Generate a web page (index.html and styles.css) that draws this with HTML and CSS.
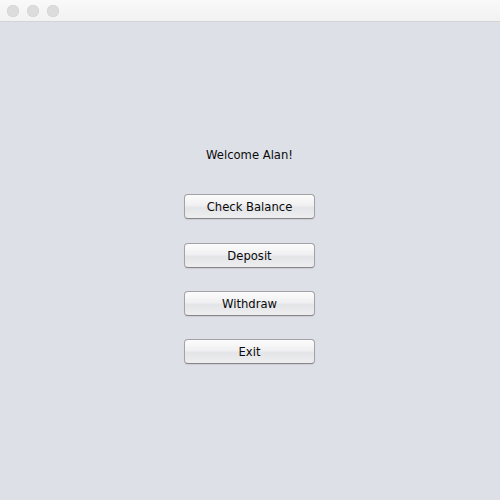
FILE: index.html
```html
<!DOCTYPE html>
<html>
<head>
<meta charset="utf-8">
<link rel="stylesheet" href="styles.css">
</head>
<body>
<div class="window">
  <div class="titlebar">
    <span class="dot"></span><span class="dot"></span><span class="dot"></span>
  </div>
  <div class="content">
    <div class="welcome">Welcome Alan!</div>
    <div class="buttons">
      <button class="btn">Check Balance</button>
      <button class="btn">Deposit</button>
      <button class="btn">Withdraw</button>
      <button class="btn">Exit</button>
    </div>
  </div>
</div>
</body>
</html>
```
FILE: styles.css
```css
html, body {
  margin: 0;
  padding: 0;
}
body {
  width: 500px;
  height: 500px;
  overflow: hidden;
  font-family: "DejaVu Sans", "Liberation Sans", sans-serif;
}
.window {
  width: 500px;
  height: 500px;
  background: #dee0e7;
  display: flex;
  flex-direction: column;
}
.titlebar {
  height: 22px;
  background: linear-gradient(#f9f9f9, #f2f2f2);
  border-bottom: 1px solid #d3d3d3;
  display: flex;
  align-items: center;
  gap: 8px;
  padding-left: 7px;
  box-sizing: border-box;
  flex: none;
}
.dot {
  width: 12px;
  height: 12px;
  border-radius: 50%;
  background: #dcdcdc;
  box-shadow: inset 0 0 0 0.5px #d0d0d0;
}
.content {
  display: flex;
  flex-direction: column;
  align-items: center;
  padding-top: 126px;
  padding-right: 1px;
}
.welcome {
  font-size: 11.6px;
  color: #0a0a0a;
  line-height: 15px;
  height: 15px;
}
.buttons {
  display: flex;
  flex-direction: column;
  gap: 23px;
  margin-top: 31px;
}
.btn:first-child {
  margin-bottom: 1px;
}
.btn {
  width: 131px;
  height: 25px;
  margin: 0;
  padding: 0;
  font-family: "DejaVu Sans", "Liberation Sans", sans-serif;
  font-size: 11.6px;
  color: #0a0a0a;
  background: linear-gradient(#fcfcfc 0%, #f0f0f2 45%, #e4e5e8 55%, #eeeef0 100%);
  border: 1px solid #a2a2a4;
  border-bottom-color: #86868a;
  border-radius: 4px;
  box-shadow: 0 1px 1px rgba(0,0,0,0.08);
}
```
